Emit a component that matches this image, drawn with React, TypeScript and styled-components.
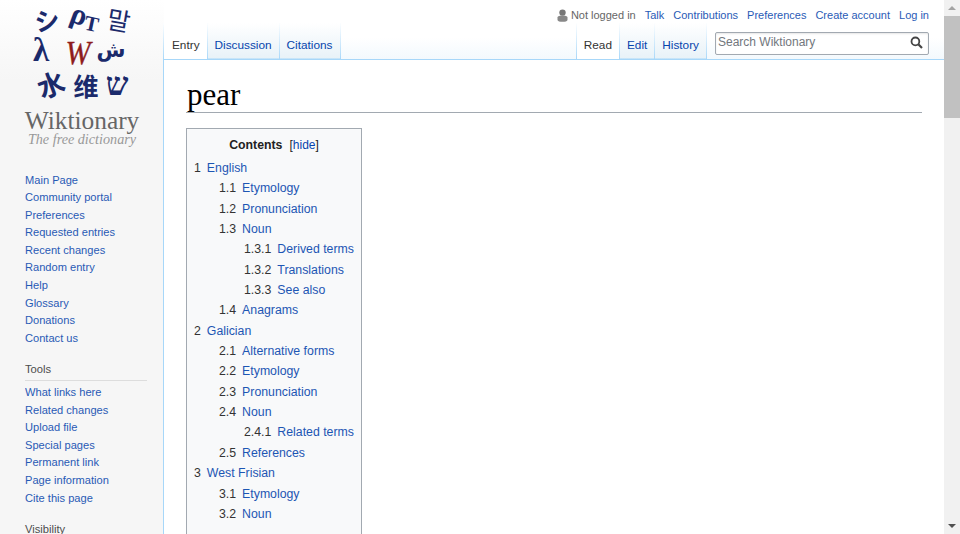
import React, {ReactElement} from 'react';
import styled, {createGlobalStyle} from 'styled-components';

const GlobalStyle = createGlobalStyle`
  html, body {
    margin: 0;
    padding: 0;
    background: #fff;
    overflow: hidden;
  }
  body {
    font-family: "Liberation Sans", Arial, sans-serif;
  }
`

const Viewport = styled.div`
  width: 960px;
  height: 534px;
  display: flex;
  overflow: hidden;
`

const Page = styled.div`
  flex: 1;
  display: flex;
  min-width: 0;
`

const Sidebar = styled.nav`
  width: 164px;
  flex: none;
  background: linear-gradient(to bottom, #fff 0, #f6f6f6 80px);
`

const LogoBox = styled.div`
  height: 160px;
  margin-bottom: 11.5px;
`

const SideList = styled.ul`
  list-style: none;
  margin: 0;
  padding: 0 0 0 25px;
`

const SideItem = styled.li`
  font-size: 11.1px;
  line-height: 17.6px;
`

const SideLink = styled.a`
  color: #0645ad;
  text-decoration: none;
  opacity: 0.88;
`

const SideHeading = styled.h3`
  margin: 13.5px 17px 3px 25px;
  padding-bottom: 3px;
  font-size: 11.2px;
  line-height: 16px;
  font-weight: normal;
  color: #4d4d4d;
  border-bottom: 1px solid #dddddd;
`

const Main = styled.div`
  flex: 1;
  min-width: 0;
  display: flex;
  flex-direction: column;
`

const Header = styled.header`
  height: 59px;
  flex: none;
  display: flex;
  flex-direction: column;
`

const PersonalBar = styled.div`
  height: 23px;
  flex: none;
  display: flex;
  align-items: center;
  justify-content: flex-end;
  gap: 9px;
  padding: 7px 15px 0 0;
  box-sizing: border-box;
  font-size: 11px;
`

const PersonalUser = styled.span`
  display: flex;
  align-items: center;
  gap: 3px;
  color: #666;
`

const PersonalLink = styled.a`
  color: #0645ad;
  text-decoration: none;
  opacity: 0.88;
`

const TabBar = styled.div`
  flex: 1;
  display: flex;
  justify-content: space-between;
  background: linear-gradient(to bottom, #fff 40%, #f3f9fd 100%);
  border-bottom: 1px solid #a7d7f9;
`

const TabGroup = styled.div<{$first?: boolean}>`
  display: flex;
  height: 36px;
  border-left: 1px solid;
  border-image: linear-gradient(to bottom, #fff 0, #a7d7f9 100%) 1;
  ${p => p.$first && 'margin-left: -1px;'}
`

const Tab = styled.a<{$active?: boolean}>`
  display: flex;
  align-items: center;
  box-sizing: border-box;
  height: 36px;
  padding: 8px 7px 0;
  font-size: 11.8px;
  text-decoration: none;
  color: ${p => (p.$active ? '#333' : '#0645ad')};
  background: ${p => (p.$active ? '#fff' : 'linear-gradient(to top, #a7d7f9 0, #e8f2f8 1px, #fff 100%)')};
  border-right: 1px solid;
  border-image: linear-gradient(to bottom, #fff 0, #a7d7f9 100%) 1;
`

const FirstTab = styled(Tab)`
  padding-left: 8px;
`

const HeaderRight = styled.div`
  display: flex;
`

const SearchBox = styled.div`
  width: 214px;
  height: 23px;
  margin: 9px 15px 0 8px;
  box-sizing: border-box;
  display: flex;
  align-items: center;
  justify-content: space-between;
  padding: 0 5px 3px 2px;
  border: 1px solid #a2a9b1;
  border-radius: 2px;
  background: #fff;
  box-shadow: inset 0 1px 2px rgba(0, 0, 0, 0.1);
  font-size: 12px;
  color: #72777d;
`

const Content = styled.main`
  flex: 1;
  min-height: 0;
  padding: 0 22px 0 22px;
  border-left: 1px solid #a7d7f9;
  margin-left: -1px;
`

const Title = styled.h1`
  margin: 0 0 15px;
  height: 54px;
  box-sizing: border-box;
  padding: 18px 0 0 1px;
  font-family: "Liberation Serif", "Times New Roman", serif;
  font-size: 31px;
  line-height: 36px;
  font-weight: normal;
  color: #000;
  border-bottom: 1px solid #a2a9b1;
`

const TocBox = styled.div`
  width: 176px;
  box-sizing: border-box;
  padding: 7px 7px 30px;
  border: 1px solid #a2a9b1;
  background: #f8f9fa;
  font-size: 12.3px;
`

const TocTitle = styled.div`
  display: flex;
  justify-content: center;
  gap: 7px;
  line-height: 18px;
  margin-bottom: 4px;
  color: #222;
`

const TocTitleText = styled.strong`
  font-weight: bold;
`

const TocToggle = styled.span`
  font-size: 12px;
  a {
    color: #0645ad;
    text-decoration: none;
  }
`

const TocRow = styled.div<{$level: number}>`
  display: flex;
  line-height: 20.35px;
  white-space: nowrap;
  padding-left: ${p => (p.$level - 1) * 25}px;
`

const TocNumber = styled.span`
  color: #333;
  margin-right: 6px;
`

const TocLink = styled.a`
  color: #0645ad;
  text-decoration: none;
  opacity: 0.9;
`

const Scrollbar = styled.div`
  width: 16px;
  flex: none;
  display: flex;
  flex-direction: column;
  background: #f1f1f1;
`

const ScrollArrow = styled.div<{$down?: boolean}>`
  height: 16px;
  flex: none;
  display: flex;
  align-items: center;
  justify-content: center;
  &::before {
    content: "";
    border-left: 4px solid transparent;
    border-right: 4px solid transparent;
    ${p => (p.$down ? 'border-top: 4px solid #505050;' : 'border-bottom: 4px solid #a3a3a3;')}
  }
`

const ScrollTrack = styled.div`
  flex: 1;
`

const ScrollThumb = styled.div`
  height: 102px;
  background: #c1c1c1;
`

const mainLinks = ['Main Page', 'Community portal', 'Preferences', 'Requested entries', 'Recent changes', 'Random entry', 'Help', 'Glossary', 'Donations', 'Contact us'];
const toolLinks = ['What links here', 'Related changes', 'Upload file', 'Special pages', 'Permanent link', 'Page information', 'Cite this page'];
const personalLinks = ['Talk', 'Contributions', 'Preferences', 'Create account', 'Log in'];

const tocEntries: [string, string][] = [
  ['1', 'English'],
  ['1.1', 'Etymology'],
  ['1.2', 'Pronunciation'],
  ['1.3', 'Noun'],
  ['1.3.1', 'Derived terms'],
  ['1.3.2', 'Translations'],
  ['1.3.3', 'See also'],
  ['1.4', 'Anagrams'],
  ['2', 'Galician'],
  ['2.1', 'Alternative forms'],
  ['2.2', 'Etymology'],
  ['2.3', 'Pronunciation'],
  ['2.4', 'Noun'],
  ['2.4.1', 'Related terms'],
  ['2.5', 'References'],
  ['3', 'West Frisian'],
  ['3.1', 'Etymology'],
  ['3.2', 'Noun'],
];

const Logo = () : ReactElement => {
  const navy = '#1b2a6b';
  const cjk = '"Noto Sans CJK KR", "Liberation Sans", sans-serif';
  const serif = '"Liberation Serif", serif';
  const dejavu = '"DejaVu Sans", sans-serif';
  return (
    <svg width="164" height="160" viewBox="0 0 164 160">
      <g fill={navy} textAnchor="middle">
        <text x="47" y="30" fontSize="25" fontFamily={cjk} fontWeight="bold" transform="rotate(-8 47 20)">シ</text>
        <text x="78" y="24" fontSize="30" fontFamily={serif} fontWeight="bold" transform="rotate(20 78 18)">ρ</text>
        <text x="92" y="31" fontSize="21" fontFamily={serif} fontWeight="bold" transform="rotate(12 92 22)">T</text>
        <text x="119" y="30" fontSize="25" fontFamily={cjk} transform="rotate(10 119 19)">말</text>
        <text x="41" y="61" fontSize="33" fontFamily={serif} fontWeight="bold">λ</text>
        <text x="111" y="57" fontSize="21" fontFamily={dejavu} fontWeight="bold">ش</text>
        <text x="51" y="95" fontSize="27" fontFamily={cjk} fontWeight="bold" transform="rotate(-20 51 85)">水</text>
        <text x="86" y="96" fontSize="25" fontFamily='"Noto Sans CJK SC", sans-serif' fontWeight="bold">维</text>
        <text x="117" y="95" fontSize="32" fontFamily={serif} fontWeight="bold">ש</text>
      </g>
      <text x="78" y="64" fontSize="34" fontFamily={serif} fontStyle="italic" fill="#8e1c1c" stroke="#8e1c1c" strokeWidth="0.4" textAnchor="middle" textLength="25" lengthAdjust="spacingAndGlyphs">W</text>
      <text x="82" y="129" fontSize="25.4" fontFamily={serif} fill="#666" textAnchor="middle">Wiktionary</text>
      <text x="82" y="143.5" fontSize="14.2" fontStyle="italic" fontFamily={serif} fill="#999" textAnchor="middle">The free dictionary</text>
    </svg>
  );
}

const UserIcon = () : ReactElement => (
  <svg width="11" height="13" viewBox="0 0 11 13">
    <circle cx="5.5" cy="3.6" r="3.2" fill="#777" />
    <path d="M0.5 8.5 C0.5 7 3 6.6 5.5 6.6 C8 6.6 10.5 7 10.5 8.5 V11 C10.5 12.4 8 12.8 5.5 12.8 C3 12.8 0.5 12.4 0.5 11 Z" fill="#888" />
  </svg>
);

const SearchIcon = () : ReactElement => (
  <svg width="13" height="13" viewBox="0 0 13 13" fill="none" stroke="#444" strokeWidth="1.8">
    <circle cx="5.4" cy="5.4" r="3.9" />
    <path d="M8.3 8.3 L12 12" strokeWidth="2.2" />
  </svg>
);

const App = () : ReactElement => {
  return (
    <Viewport>
      <GlobalStyle />
      <Page>
        <Sidebar>
          <LogoBox><Logo /></LogoBox>
          <SideList>
            {mainLinks.map(link => <SideItem key={link}><SideLink href="#">{link}</SideLink></SideItem>)}
          </SideList>
          <SideHeading>Tools</SideHeading>
          <SideList>
            {toolLinks.map(link => <SideItem key={link}><SideLink href="#">{link}</SideLink></SideItem>)}
          </SideList>
          <SideHeading>Visibility</SideHeading>
        </Sidebar>
        <Main>
          <Header>
            <PersonalBar>
              <PersonalUser><UserIcon />Not logged in</PersonalUser>
              {personalLinks.map(link => <PersonalLink key={link} href="#">{link}</PersonalLink>)}
            </PersonalBar>
            <TabBar>
              <TabGroup $first>
                <FirstTab $active href="#">Entry</FirstTab>
                <Tab href="#">Discussion</Tab>
                <Tab href="#">Citations</Tab>
              </TabGroup>
              <HeaderRight>
                <TabGroup>
                  <Tab $active href="#">Read</Tab>
                  <Tab href="#">Edit</Tab>
                  <Tab href="#">History</Tab>
                </TabGroup>
                <SearchBox>Search Wiktionary<SearchIcon /></SearchBox>
              </HeaderRight>
            </TabBar>
          </Header>
          <Content>
            <Title>pear</Title>
            <TocBox>
              <TocTitle>
                <TocTitleText>Contents</TocTitleText>
                <TocToggle>[<a href="#">hide</a>]</TocToggle>
              </TocTitle>
              {tocEntries.map(([num, label], i) => (
                <TocRow key={i} $level={num.split('.').length}>
                  <TocNumber>{num}</TocNumber>
                  <TocLink href="#">{label}</TocLink>
                </TocRow>
              ))}
            </TocBox>
          </Content>
        </Main>
      </Page>
      <Scrollbar>
        <ScrollArrow />
        <ScrollThumb />
        <ScrollTrack />
        <ScrollArrow $down />
      </Scrollbar>
    </Viewport>
  );
}

export default App;
